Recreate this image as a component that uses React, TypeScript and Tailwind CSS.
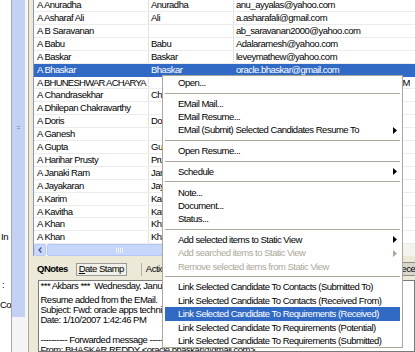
import React from "react";

const rows: [string, string, string][] = [
  ["A Anuradha", "Anuradha", "anu_ayyalas@yahoo.com"],
  ["A Asharaf Ali", "Ali", "a.asharafali@gmail.com"],
  ["A B Saravanan", "", "ab_saravanan2000@yahoo.com"],
  ["A Babu", "Babu", "Adalaramesh@yahoo.com"],
  ["A Baskar", "Baskar", "leveymathew@yahoo.com"],
  ["A Bhaskar", "Bhaskar", "oracle.bhaskar@gmail.com"],
  ["A BHUNESHWAR ACHARYA", "", "BHUNESHWAR.ACHARYA@YAHOO.COM"],
  ["A Chandrasekhar", "Chandrasekhar", "chandrasekhar_a@yahoo.com"],
  ["A Dhilepan Chakravarthy", "", "dhilepan_c@gmail.com"],
  ["A Doris", "Doris", "doris_a@yahoo.com"],
  ["A Ganesh", "", "ganesh_a@yahoo.com"],
  ["A Gupta", "Gupta", "gupta_a@yahoo.com"],
  ["A Harihar Prusty", "Prusty", "hprusty@gmail.com"],
  ["A Janaki Ram", "Janaki Ram", "janakiram@yahoo.com"],
  ["A Jayakaran", "Jayakaran", "jayakaran@yahoo.com"],
  ["A Karim", "Karim", "karim_a@yahoo.com"],
  ["A Kavitha", "Kavitha", "kavitha_a@yahoo.com"],
  ["A Khan", "Khan", "khan_a@yahoo.com"],
  ["A Khan", "Khan", "khan_b@yahoo.com"],
];

type Item =
  | { sep: true }
  | { sep?: false; label: string; arrow?: boolean; disabled?: boolean; hi?: boolean };

const menu: Item[] = [
  { label: "Open..." },
  { sep: true },
  { label: "EMail Mail..." },
  { label: "EMail Resume..." },
  { label: "EMail (Submit) Selected Candidates Resume To", arrow: true },
  { sep: true },
  { label: "Open Resume..." },
  { sep: true },
  { label: "Schedule", arrow: true },
  { sep: true },
  { label: "Note..." },
  { label: "Document..." },
  { label: "Status..." },
  { sep: true },
  { label: "Add selected items to Static View", arrow: true },
  { label: "Add searched items to Static View", arrow: true, disabled: true },
  { label: "Remove selected items from Static View", disabled: true },
  { sep: true },
  { label: "Link Selected Candidate To Contacts (Submitted To)" },
  { label: "Link Selected Candidate To Contacts (Received From)" },
  { label: "Link Selected Candidate To Requirements (Received)", hi: true },
  { label: "Link Selected Candidate To Requirements (Potential)" },
  { label: "Link Selected Candidate To Requirements (Submitted)" },
];

function Arrow({ color }: { color: string }) {
  return (
    <svg width="4" height="7" viewBox="0 0 4 7" className="shrink-0">
      <path d="M0 0 L4 3.5 L0 7 Z" fill={color} />
    </svg>
  );
}

export default function App() {
  return (
    <div className="relative flex h-[352px] w-[415px] overflow-hidden bg-white font-[Liberation_Sans,Arial,sans-serif] text-[9.5px] tracking-[-0.5px] text-black">
      {/* left clipped labels */}
      <div className="flex w-[11px] shrink-0 flex-col whitespace-nowrap bg-white leading-[12px]">
        <div className="mt-[231px] h-[12px] pl-px">In</div>
        <div className="mt-[36px] h-[12px] pl-[2px]">:</div>
        <div className="mt-[8px] h-[12px]">Co:</div>
      </div>
      <div className="w-px shrink-0 bg-[#a9a9b0]" />
      <div className="flex w-[13px] shrink-0 flex-col">
        <div className="flex h-[317px] flex-col items-center bg-[#c5d0f5] pt-[126px]">
          <div className="h-px w-[3px] bg-[#8e9fd8]" />
          <div className="mt-px h-px w-[3px] bg-[#8e9fd8]" />
        </div>
        <div className="flex-1 bg-[#f4f4f6]" />
      </div>
      <div className="w-[3px] shrink-0 bg-[#f6f6f3]" />
      <div className="w-px shrink-0 bg-[#aca899]" />
      <div className="w-[4px] shrink-0 bg-[#ece9d8]" />

      {/* main panel */}
      <div className="flex min-w-0 flex-1 flex-col bg-[#ece9d8]">
        {/* list */}
        <div className="flex h-[256px] shrink-0 flex-col border-l border-[#8b9bb5] bg-white">
          <div className="h-[244px] overflow-hidden">
            <div className="-mt-[0.75px]">
              {rows.map((r, i) => {
                const sel = i === 5;
                const caps = i === 6;
                return (
                  <div
                    key={i}
                    className={
                      "flex h-[12.9px] whitespace-nowrap leading-[12.9px] " +
                      (sel ? "bg-[#316ac5] text-white" : "border-b border-[#ececec]")
                    }
                  >
                    <div className={"w-[115px] shrink-0 overflow-hidden border-r pl-[3px] " + (caps ? "tracking-[-0.75px] " : "") + (sel ? "border-[#316ac5]" : "border-[#e2e2e2]")}>{r[0]}</div>
                    <div className={"w-[85px] shrink-0 overflow-hidden border-r pl-[2px] " + (sel ? "border-[#316ac5]" : "border-[#e2e2e2]")}>{r[1]}</div>
                    {caps ? (
                      <div className="flex w-[176px] shrink-0 justify-end overflow-hidden">{r[2]}</div>
                    ) : (
                      <div className="min-w-0 flex-1 overflow-hidden pl-[2px]">{r[2]}</div>
                    )}
                  </div>
                );
              })}
            </div>
          </div>
          {/* horizontal scrollbar */}
          <div className="flex h-[12px] shrink-0 items-stretch bg-[#f4f3ee]">
            <div className="flex w-[12px] shrink-0 items-center justify-center rounded-[2px] border border-[#b8cbf5] bg-[#c9d8fc]">
              <svg width="4" height="6" viewBox="0 0 4 6">
                <path d="M3.5 0.5 L1 3 L3.5 5.5" stroke="#4d6185" strokeWidth="1.5" fill="none" />
              </svg>
            </div>
            <div className="ml-px flex w-[144px] shrink-0 items-center justify-center gap-px rounded-[2px] border border-[#b3c7f4] bg-[#c6d6fb]">
              <div className="h-[5px] w-px bg-[#eef3fe]" />
              <div className="h-[5px] w-px bg-[#eef3fe]" />
              <div className="h-[5px] w-px bg-[#eef3fe]" />
              <div className="h-[5px] w-px bg-[#eef3fe]" />
            </div>
            <div className="flex-1" />
          </div>
        </div>

        {/* toolbar */}
        <div className="flex h-[24px] shrink-0 items-center whitespace-nowrap pl-[4px] pt-[2px]">
          <span className="font-bold">QNotes</span>
          <div className="ml-[8px] flex h-[13px] w-[51px] shrink-0 items-center justify-center border border-[#9a9a96] bg-[#f1f0ea]">
            <span>
              <span className="underline">D</span>ate Stamp
            </span>
          </div>
          <div className="ml-[14px] flex h-[13px] w-[46px] shrink-0 items-center border-l border-[#b5b2a5] pl-[4px]">
            Action...
          </div>
          <div className="-mr-[40px] ml-auto flex h-[14px] w-[64px] shrink-0 items-center border border-[#8f8d84] bg-[#d9d6cc] pl-[3px]">
            Received
          </div>
        </div>

        {/* notes */}
        <div className="ml-[5px] flex-1 overflow-hidden border border-[#7a7a7a] bg-white pl-[1.5px] leading-[10px] whitespace-pre">
          <div className="mb-[3.5px]">*** Akbars ***  Wednesday, January 10, 2007</div>
          <div>Resume added from the EMail.</div>
          <div>Subject: Fwd: oracle apps technical consultant</div>
          <div>Date: 1/10/2007 1:42:46 PM</div>
          <div>&nbsp;</div>
          <div>---------- Forwarded message ----------</div>
          <div>From: BHASKAR REDDY &lt;oracle.bhaskar@gmail.com&gt;</div>
        </div>
      </div>

      {/* context menu */}
      <div className="absolute left-[162px] top-[75px] w-[241px] border border-[#aca899] bg-white">
        {menu.map((m, i) =>
          m.sep ? (
            <div key={i} className="flex h-[7.3px] items-center px-[2px]">
              <div className="h-px w-full bg-[#aca899]" />
            </div>
          ) : (
            <div key={i} className="px-[2px]">
              <div
                className={
                  "flex h-[13.4px] items-center whitespace-nowrap pl-[13px] pr-[3px] leading-[13.4px] " +
                  (m.hi ? "bg-[#316ac5] text-white" : m.disabled ? "text-[#aca899]" : "text-black")
                }
              >
                <span className="flex-1">{m.label}</span>
                {m.arrow && <Arrow color={m.disabled ? "#aca899" : m.hi ? "#fff" : "#000"} />}
              </div>
            </div>
          )
        )}
      </div>
    </div>
  );
}
